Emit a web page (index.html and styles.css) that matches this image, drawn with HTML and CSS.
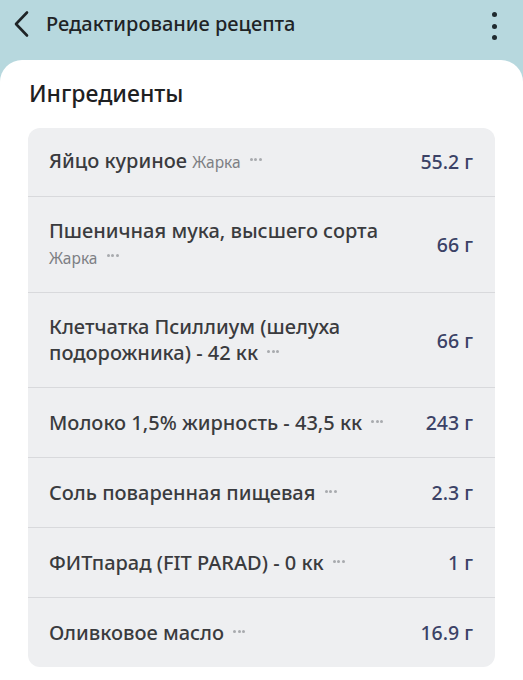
FILE: index.html
```html
<!DOCTYPE html>
<html lang="ru">
<head>
<meta charset="utf-8">
<link rel="stylesheet" href="styles.css">
</head>
<body>
<header class="topbar">
  <svg class="back" width="20" height="28" viewBox="0 0 20 28"><path d="M15 2.5 L4 14 L15 25.5" fill="none" stroke="#1f2426" stroke-width="2.6" stroke-linecap="round" stroke-linejoin="round"/></svg>
  <h1 class="title">Редактирование рецепта</h1>
  <div class="kebab"><span></span><span></span><span></span></div>
</header>
<main class="sheet">
  <h2 class="section">Ингредиенты</h2>
  <ul class="list">
    <li class="row"><div class="name">Яйцо куриное <span class="tag">Жарка</span> <span class="more"><i></i><i></i><i></i></span></div><div class="val">55.2 г</div></li>
    <li class="row"><div class="name">Пшеничная мука, высшего сорта<br><span class="tag">Жарка</span> <span class="more"><i></i><i></i><i></i></span></div><div class="val">66 г</div></li>
    <li class="row"><div class="name">Клетчатка Псиллиум (шелуха подорожника) - 42 кк <span class="more"><i></i><i></i><i></i></span></div><div class="val">66 г</div></li>
    <li class="row"><div class="name">Молоко 1,5% жирность - 43,5 кк <span class="more"><i></i><i></i><i></i></span></div><div class="val">243 г</div></li>
    <li class="row"><div class="name">Соль поваренная пищевая <span class="more"><i></i><i></i><i></i></span></div><div class="val">2.3 г</div></li>
    <li class="row"><div class="name">ФИТпарад (FIT PARAD) - 0 кк <span class="more"><i></i><i></i><i></i></span></div><div class="val">1 г</div></li>
    <li class="row"><div class="name">Оливковое масло <span class="more"><i></i><i></i><i></i></span></div><div class="val">16.9 г</div></li>
  </ul>
</main>
</body>
</html>
```

FILE: styles.css
```css
* { box-sizing: border-box; }
html, body { margin: 0; padding: 0; }
body {
  width: 523px;
  height: 680px;
  overflow: hidden;
  background: #b7d8de;
  font-family: "Noto Sans", "Open Sans", sans-serif;
  color: #3a3b3e;
}
.topbar {
  height: 60px;
  display: flex;
  align-items: flex-start;
  padding: 10px 0 0 12px;
}
.back { flex: none; }
.title {
  margin: 0 0 0 14px;
  font-size: 20px;
  font-weight: 500;
  color: #1f2426;
  line-height: 28px;
  flex: 1;
}
.kebab {
  display: flex;
  flex-direction: column;
  gap: 6.5px;
  padding-top: 2px;
  margin-right: 26px;
}
.kebab span {
  width: 5px; height: 5px; border-radius: 50%;
  background: #1f2a2e;
}
.sheet {
  background: #fff;
  border-radius: 22px 22px 0 0;
  height: 620px;
  padding: 19px 28px 0 28px;
}
.section {
  margin: 0 0 21px 1px;
  font-size: 23px;
  font-weight: 500;
  color: #1e2022;
  line-height: 28px;
}
.list {
  list-style: none;
  margin: 0;
  padding: 0;
  background: #eeeff1;
  border-radius: 12px;
  width: 467px;
}
.row {
  display: flex;
  align-items: center;
  justify-content: space-between;
  padding: 21px 22px 21px 21px;
  border-top: 1px solid #d8d9dc;
}
.row:first-child { border-top: none; padding-top: 20px; }
.name {
  font-size: 20px;
  font-weight: 500;
  line-height: 26px;
  color: #3a3b3e;
  max-width: 345px;
}
.tag {
  font-size: 15.5px;
  color: #7d7f84;
  font-weight: 400;
}
.more {
  display: inline-flex;
  gap: 1.5px;
  vertical-align: middle;
  margin-left: 4px;
  position: relative;
  top: -3px;
}
.more i {
  width: 3px; height: 3px; border-radius: 50%;
  background: #a8aaae;
}
.val {
  font-size: 19.5px;
  font-weight: 500;
  color: #3b4266;
  white-space: nowrap;
}
```
